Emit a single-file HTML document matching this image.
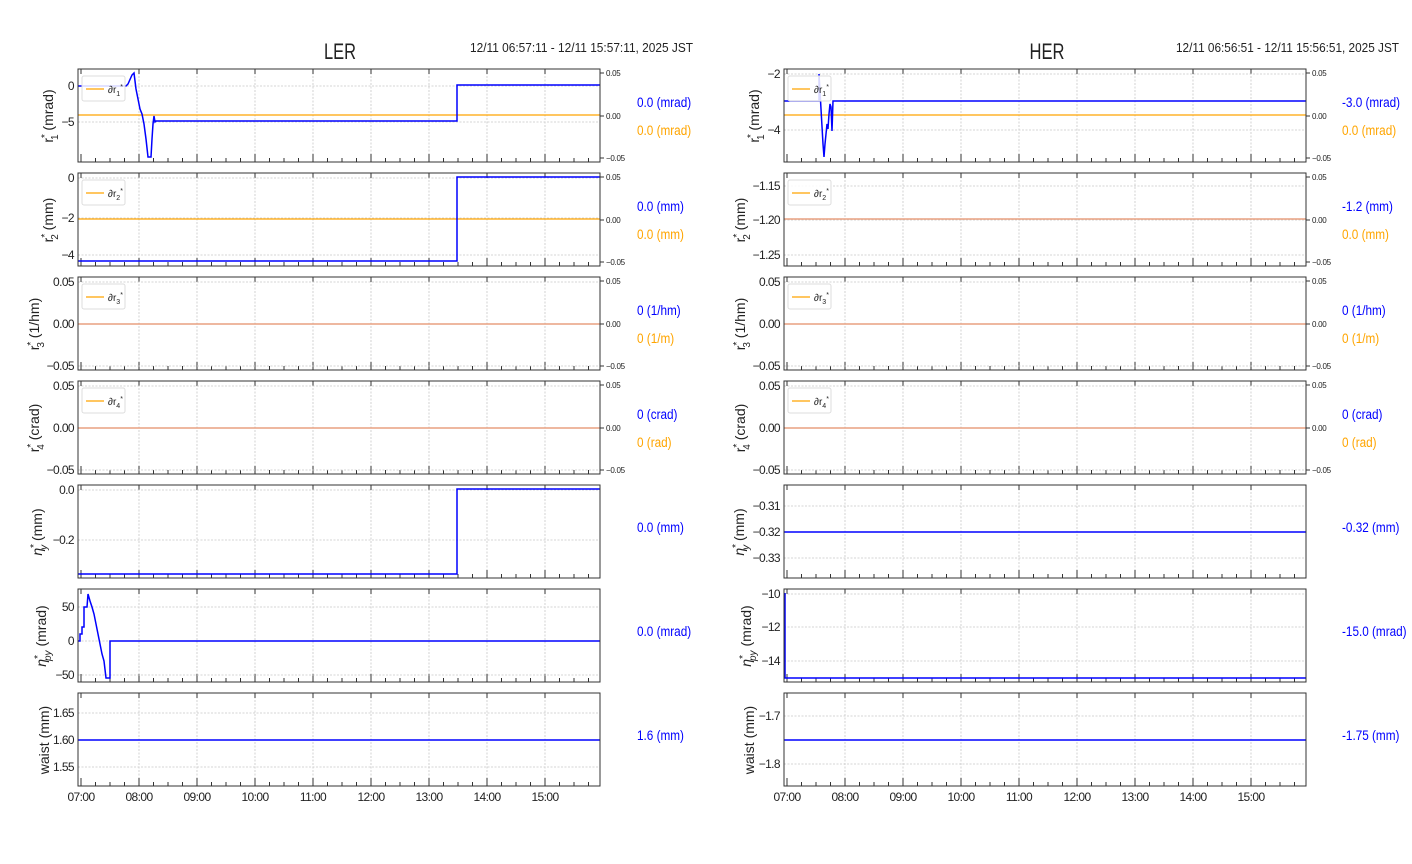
<!DOCTYPE html>
<html><head><meta charset="utf-8"><style>
html,body{margin:0;padding:0;background:#fff;width:1412px;height:864px;overflow:hidden}
svg{display:block}
text{font-family:"Liberation Sans",sans-serif;fill:#222}
.tk{font-size:12px;letter-spacing:-0.6px}
.sm{font-size:8px;letter-spacing:-0.3px}
.yl{font-family:"DejaVu Sans","Liberation Sans",sans-serif;font-size:14px}
.vb{fill:#0000ff;font-size:14px}
.vo{fill:#ffa500;font-size:14px}
.b{fill:none;stroke:#0000ff;stroke-width:1.5}
.o{fill:none;stroke:#ffa500;stroke-width:1.3}
.r{fill:none;stroke:#e8a080;stroke-width:1.5}
.g{stroke:#c8c8c8;stroke-width:0.8;stroke-dasharray:2,1.5;fill:none}
</style></head><body>
<svg width="1412" height="864" viewBox="0 0 1412 864" xmlns="http://www.w3.org/2000/svg">
<defs>
<g id="fr">
<path class="g" d="M61,0V93M119,0V93M177,0V93M235,0V93M293,0V93M351,0V93M409,0V93M467,0V93"/>
<path stroke="#333" stroke-width="1" fill="none" d="M3,93V85M61,93V85M119,93V85M177,93V85M235,93V85M293,93V85M351,93V85M409,93V85M467,93V85M17.5,93V89M32,93V89M46.5,93V89M75.5,93V89M90,93V89M104.5,93V89M133.5,93V89M148,93V89M162.5,93V89M191.5,93V89M206,93V89M220.5,93V89M249.5,93V89M264,93V89M278.5,93V89M307.5,93V89M322,93V89M336.5,93V89M365.5,93V89M380,93V89M394.5,93V89M423.5,93V89M438,93V89M452.5,93V89M481.5,93V89M496,93V89M510.5,93V89M3,0V5M61,0V5M119,0V5M177,0V5M235,0V5M293,0V5M351,0V5M409,0V5M467,0V5"/>
</g>
<g id="rt">
<path stroke="#333" stroke-width="1" d="M522,4h4M522,47h4M522,89h4"/>
</g>
<g id="lg">
<rect x="4" y="7" width="43" height="25" rx="2" fill="#fff" fill-opacity="0.85" stroke="#ddd"/>
<path class="o" d="M8,20H26"/>
</g>
</defs>

<text x="340" y="59" font-size="22" text-anchor="middle" textLength="32" lengthAdjust="spacingAndGlyphs">LER</text>
<text x="470" y="52" font-size="13" textLength="223" lengthAdjust="spacingAndGlyphs">12/11 06:57:11 - 12/11 15:57:11, 2025 JST</text>
<text x="1047" y="59" font-size="22" text-anchor="middle" textLength="35" lengthAdjust="spacingAndGlyphs">HER</text>
<text x="1176" y="52" font-size="13" textLength="223" lengthAdjust="spacingAndGlyphs">12/11 06:56:51 - 12/11 15:56:51, 2025 JST</text>

<!-- LEFT -->
<g transform="translate(78,69)">
<use href="#fr"/>
<path class="g" d="M0,17H522M0,53H522"/>
<path class="o" d="M0,46H522"/>
<path class="b" d="M0,17L48,17L50,15L54,6L56,4L58,20L60,30L62,40L64,45L66,55L68,70L70,88L73,88L74,70L75,55L76,47L77,53L78,52L379,52L379,16L522,16"/>
<use href="#lg"/><text x="30" y="24" font-size="10">∂r<tspan font-size="7" dy="3">1</tspan><tspan font-size="7" dy="-7">*</tspan></text>
<rect width="522" height="93" fill="none" stroke="#333"/><use href="#rt"/>
<text class="sm" x="528" y="7">0.05</text><text class="sm" x="528" y="50">0.00</text><text class="sm" x="528" y="92">−0.05</text>
<text class="tk" x="-4" y="21" text-anchor="end">0</text><text class="tk" x="-4" y="57" text-anchor="end">−5</text>
</g>
<g transform="translate(78,173)">
<use href="#fr"/>
<path class="g" d="M0,5H522M0,45H522M0,82H522"/>
<path class="o" d="M0,46H522"/>
<path class="b" d="M0,88L379,88L379,4L522,4"/>
<use href="#lg"/><text x="30" y="24" font-size="10">∂r<tspan font-size="7" dy="3">2</tspan><tspan font-size="7" dy="-7">*</tspan></text>
<rect width="522" height="93" fill="none" stroke="#333"/><use href="#rt"/>
<text class="sm" x="528" y="7">0.05</text><text class="sm" x="528" y="50">0.00</text><text class="sm" x="528" y="92">−0.05</text>
<text class="tk" x="-4" y="9" text-anchor="end">0</text><text class="tk" x="-4" y="49" text-anchor="end">−2</text><text class="tk" x="-4" y="86" text-anchor="end">−4</text>
</g>
<g transform="translate(78,277)">
<use href="#fr"/>
<path class="g" d="M0,5H522M0,89H522"/>
<path class="r" d="M0,47H522"/>
<use href="#lg"/><text x="30" y="24" font-size="10">∂r<tspan font-size="7" dy="3">3</tspan><tspan font-size="7" dy="-7">*</tspan></text>
<rect width="522" height="93" fill="none" stroke="#333"/><use href="#rt"/>
<text class="sm" x="528" y="7">0.05</text><text class="sm" x="528" y="50">0.00</text><text class="sm" x="528" y="92">−0.05</text>
<text class="tk" x="-4" y="9" text-anchor="end">0.05</text><text class="tk" x="-4" y="51" text-anchor="end">0.00</text><text class="tk" x="-4" y="93" text-anchor="end">−0.05</text>
</g>
<g transform="translate(78,381)">
<use href="#fr"/>
<path class="g" d="M0,5H522M0,89H522"/>
<path class="r" d="M0,47H522"/>
<use href="#lg"/><text x="30" y="24" font-size="10">∂r<tspan font-size="7" dy="3">4</tspan><tspan font-size="7" dy="-7">*</tspan></text>
<rect width="522" height="93" fill="none" stroke="#333"/><use href="#rt"/>
<text class="sm" x="528" y="7">0.05</text><text class="sm" x="528" y="50">0.00</text><text class="sm" x="528" y="92">−0.05</text>
<text class="tk" x="-4" y="9" text-anchor="end">0.05</text><text class="tk" x="-4" y="51" text-anchor="end">0.00</text><text class="tk" x="-4" y="93" text-anchor="end">−0.05</text>
</g>
<g transform="translate(78,485)">
<use href="#fr"/>
<path class="g" d="M0,5H522M0,55H522"/>
<path class="b" d="M0,89L379,89L379,4L522,4"/>
<rect width="522" height="93" fill="none" stroke="#333"/>
<text class="tk" x="-4" y="9" text-anchor="end">0.0</text><text class="tk" x="-4" y="59" text-anchor="end">−0.2</text>
</g>
<g transform="translate(78,589)">
<use href="#fr"/>
<path class="g" d="M0,18H522M0,52H522M0,86H522"/>
<path class="b" d="M0,52L2,52L2,45L4,45L4,38L6,38L6,18L9,18L10,5L12,12L14,18L16,25L18,35L20,45L22,55L24,65L26,72L28,89L32,89L32,52L522,52"/>
<rect width="522" height="93" fill="none" stroke="#333"/>
<text class="tk" x="-4" y="22" text-anchor="end">50</text><text class="tk" x="-4" y="56" text-anchor="end">0</text><text class="tk" x="-4" y="90" text-anchor="end">−50</text>
</g>
<g transform="translate(78,693)">
<use href="#fr"/>
<path class="g" d="M0,20H522M0,47H522M0,74H522"/>
<path class="b" d="M0,47H522"/>
<rect width="522" height="93" fill="none" stroke="#333"/>
<text class="tk" x="-4" y="24" text-anchor="end">1.65</text><text class="tk" x="-4" y="51" text-anchor="end">1.60</text><text class="tk" x="-4" y="78" text-anchor="end">1.55</text>
<g class="tk" text-anchor="middle"><text x="3" y="108">07:00</text><text x="61" y="108">08:00</text><text x="119" y="108">09:00</text><text x="177" y="108">10:00</text><text x="235" y="108">11:00</text><text x="293" y="108">12:00</text><text x="351" y="108">13:00</text><text x="409" y="108">14:00</text><text x="467" y="108">15:00</text></g>
</g>

<!-- RIGHT -->
<g transform="translate(784,69)">
<use href="#fr"/>
<path class="g" d="M0,5H522M0,61H522"/>
<path class="o" d="M0,46H522"/>
<path class="b" d="M0,32L35,32L35,5L37,40L39,75L40,88L41,75L43,55L44,60L45,45L46,35L47,38L48,62L49,32L522,32"/>
<use href="#lg"/><text x="30" y="24" font-size="10">∂r<tspan font-size="7" dy="3">1</tspan><tspan font-size="7" dy="-7">*</tspan></text>
<rect width="522" height="93" fill="none" stroke="#333"/><use href="#rt"/>
<text class="sm" x="528" y="7">0.05</text><text class="sm" x="528" y="50">0.00</text><text class="sm" x="528" y="92">−0.05</text>
<text class="tk" x="-4" y="9" text-anchor="end">−2</text><text class="tk" x="-4" y="65" text-anchor="end">−4</text>
</g>
<g transform="translate(784,173)">
<use href="#fr"/>
<path class="g" d="M0,13H522M0,47H522M0,82H522"/>
<path class="r" d="M0,46H522"/>
<use href="#lg"/><text x="30" y="24" font-size="10">∂r<tspan font-size="7" dy="3">2</tspan><tspan font-size="7" dy="-7">*</tspan></text>
<rect width="522" height="93" fill="none" stroke="#333"/><use href="#rt"/>
<text class="sm" x="528" y="7">0.05</text><text class="sm" x="528" y="50">0.00</text><text class="sm" x="528" y="92">−0.05</text>
<text class="tk" x="-4" y="17" text-anchor="end">−1.15</text><text class="tk" x="-4" y="51" text-anchor="end">−1.20</text><text class="tk" x="-4" y="86" text-anchor="end">−1.25</text>
</g>
<g transform="translate(784,277)">
<use href="#fr"/>
<path class="g" d="M0,5H522M0,89H522"/>
<path class="r" d="M0,47H522"/>
<use href="#lg"/><text x="30" y="24" font-size="10">∂r<tspan font-size="7" dy="3">3</tspan><tspan font-size="7" dy="-7">*</tspan></text>
<rect width="522" height="93" fill="none" stroke="#333"/><use href="#rt"/>
<text class="sm" x="528" y="7">0.05</text><text class="sm" x="528" y="50">0.00</text><text class="sm" x="528" y="92">−0.05</text>
<text class="tk" x="-4" y="9" text-anchor="end">0.05</text><text class="tk" x="-4" y="51" text-anchor="end">0.00</text><text class="tk" x="-4" y="93" text-anchor="end">−0.05</text>
</g>
<g transform="translate(784,381)">
<use href="#fr"/>
<path class="g" d="M0,5H522M0,89H522"/>
<path class="r" d="M0,47H522"/>
<use href="#lg"/><text x="30" y="24" font-size="10">∂r<tspan font-size="7" dy="3">4</tspan><tspan font-size="7" dy="-7">*</tspan></text>
<rect width="522" height="93" fill="none" stroke="#333"/><use href="#rt"/>
<text class="sm" x="528" y="7">0.05</text><text class="sm" x="528" y="50">0.00</text><text class="sm" x="528" y="92">−0.05</text>
<text class="tk" x="-4" y="9" text-anchor="end">0.05</text><text class="tk" x="-4" y="51" text-anchor="end">0.00</text><text class="tk" x="-4" y="93" text-anchor="end">−0.05</text>
</g>
<g transform="translate(784,485)">
<use href="#fr"/>
<path class="g" d="M0,21H522M0,47H522M0,73H522"/>
<path class="b" d="M0,47H522"/>
<rect width="522" height="93" fill="none" stroke="#333"/>
<text class="tk" x="-4" y="25" text-anchor="end">−0.31</text><text class="tk" x="-4" y="51" text-anchor="end">−0.32</text><text class="tk" x="-4" y="77" text-anchor="end">−0.33</text>
</g>
<g transform="translate(784,589)">
<use href="#fr"/>
<path class="g" d="M0,5H522M0,38H522M0,72H522"/>
<path class="b" d="M1,4V89H522"/>
<rect width="522" height="93" fill="none" stroke="#333"/>
<text class="tk" x="-4" y="9" text-anchor="end">−10</text><text class="tk" x="-4" y="42" text-anchor="end">−12</text><text class="tk" x="-4" y="76" text-anchor="end">−14</text>
</g>
<g transform="translate(784,693)">
<use href="#fr"/>
<path class="g" d="M0,23H522M0,47H522M0,71H522"/>
<path class="b" d="M0,47H522"/>
<rect width="522" height="93" fill="none" stroke="#333"/>
<text class="tk" x="-4" y="27" text-anchor="end">−1.7</text><text class="tk" x="-4" y="75" text-anchor="end">−1.8</text>
<g class="tk" text-anchor="middle"><text x="3" y="108">07:00</text><text x="61" y="108">08:00</text><text x="119" y="108">09:00</text><text x="177" y="108">10:00</text><text x="235" y="108">11:00</text><text x="293" y="108">12:00</text><text x="351" y="108">13:00</text><text x="409" y="108">14:00</text><text x="467" y="108">15:00</text></g>
</g>

<!-- Y labels left -->
<g class="yl" text-anchor="middle">
<text transform="translate(53,116) rotate(-90)">r<tspan font-size="10" dy="-5">*</tspan><tspan font-size="10" dx="-6" dy="10">1</tspan><tspan dy="-5">  (mrad)</tspan></text>
<text transform="translate(53,220) rotate(-90)">r<tspan font-size="10" dy="-5">*</tspan><tspan font-size="10" dx="-6" dy="10">2</tspan><tspan dy="-5">  (mm)</tspan></text>
<text transform="translate(39,324) rotate(-90)">r<tspan font-size="10" dy="-5">*</tspan><tspan font-size="10" dx="-6" dy="10">3</tspan><tspan dy="-5">  (1/hm)</tspan></text>
<text transform="translate(39,428) rotate(-90)">r<tspan font-size="10" dy="-5">*</tspan><tspan font-size="10" dx="-6" dy="10">4</tspan><tspan dy="-5">  (crad)</tspan></text>
<text transform="translate(42,532) rotate(-90)"><tspan font-style="italic">η</tspan><tspan font-size="10" dy="-5">*</tspan><tspan font-size="10" font-style="italic" dx="-6" dy="10">y</tspan><tspan dy="-5">  (mm)</tspan></text>
<text transform="translate(46,636) rotate(-90)"><tspan font-style="italic">η</tspan><tspan font-size="10" dy="-5">*</tspan><tspan font-size="10" font-style="italic" dx="-6" dy="10">py</tspan><tspan dy="-5">  (mrad)</tspan></text>
<text transform="translate(49,740) rotate(-90)">waist (mm)</text>
</g>
<g class="yl" text-anchor="middle">
<text transform="translate(759,116) rotate(-90)">r<tspan font-size="10" dy="-5">*</tspan><tspan font-size="10" dx="-6" dy="10">1</tspan><tspan dy="-5">  (mrad)</tspan></text>
<text transform="translate(745,220) rotate(-90)">r<tspan font-size="10" dy="-5">*</tspan><tspan font-size="10" dx="-6" dy="10">2</tspan><tspan dy="-5">  (mm)</tspan></text>
<text transform="translate(745,324) rotate(-90)">r<tspan font-size="10" dy="-5">*</tspan><tspan font-size="10" dx="-6" dy="10">3</tspan><tspan dy="-5">  (1/hm)</tspan></text>
<text transform="translate(745,428) rotate(-90)">r<tspan font-size="10" dy="-5">*</tspan><tspan font-size="10" dx="-6" dy="10">4</tspan><tspan dy="-5">  (crad)</tspan></text>
<text transform="translate(744,532) rotate(-90)"><tspan font-style="italic">η</tspan><tspan font-size="10" dy="-5">*</tspan><tspan font-size="10" font-style="italic" dx="-6" dy="10">y</tspan><tspan dy="-5">  (mm)</tspan></text>
<text transform="translate(751,636) rotate(-90)"><tspan font-style="italic">η</tspan><tspan font-size="10" dy="-5">*</tspan><tspan font-size="10" font-style="italic" dx="-6" dy="10">py</tspan><tspan dy="-5">  (mrad)</tspan></text>
<text transform="translate(754,740) rotate(-90)">waist (mm)</text>
</g>

<!-- values -->
<g transform="translate(637,0) scale(0.84,1)">
<text class="vb" x="0" y="107">0.0 (mrad)</text><text class="vo" x="0" y="135">0.0 (mrad)</text>
<text class="vb" x="0" y="211">0.0 (mm)</text><text class="vo" x="0" y="239">0.0 (mm)</text>
<text class="vb" x="0" y="315">0 (1/hm)</text><text class="vo" x="0" y="343">0 (1/m)</text>
<text class="vb" x="0" y="419">0 (crad)</text><text class="vo" x="0" y="447">0 (rad)</text>
<text class="vb" x="0" y="532">0.0 (mm)</text>
<text class="vb" x="0" y="636">0.0 (mrad)</text>
<text class="vb" x="0" y="740">1.6 (mm)</text>
</g>
<g transform="translate(1342,0) scale(0.84,1)">
<text class="vb" x="0" y="107">-3.0 (mrad)</text><text class="vo" x="0" y="135">0.0 (mrad)</text>
<text class="vb" x="0" y="211">-1.2 (mm)</text><text class="vo" x="0" y="239">0.0 (mm)</text>
<text class="vb" x="0" y="315">0 (1/hm)</text><text class="vo" x="0" y="343">0 (1/m)</text>
<text class="vb" x="0" y="419">0 (crad)</text><text class="vo" x="0" y="447">0 (rad)</text>
<text class="vb" x="0" y="532">-0.32 (mm)</text>
<text class="vb" x="0" y="636">-15.0 (mrad)</text>
<text class="vb" x="0" y="740">-1.75 (mm)</text>
</g>
</svg>
</body></html>
